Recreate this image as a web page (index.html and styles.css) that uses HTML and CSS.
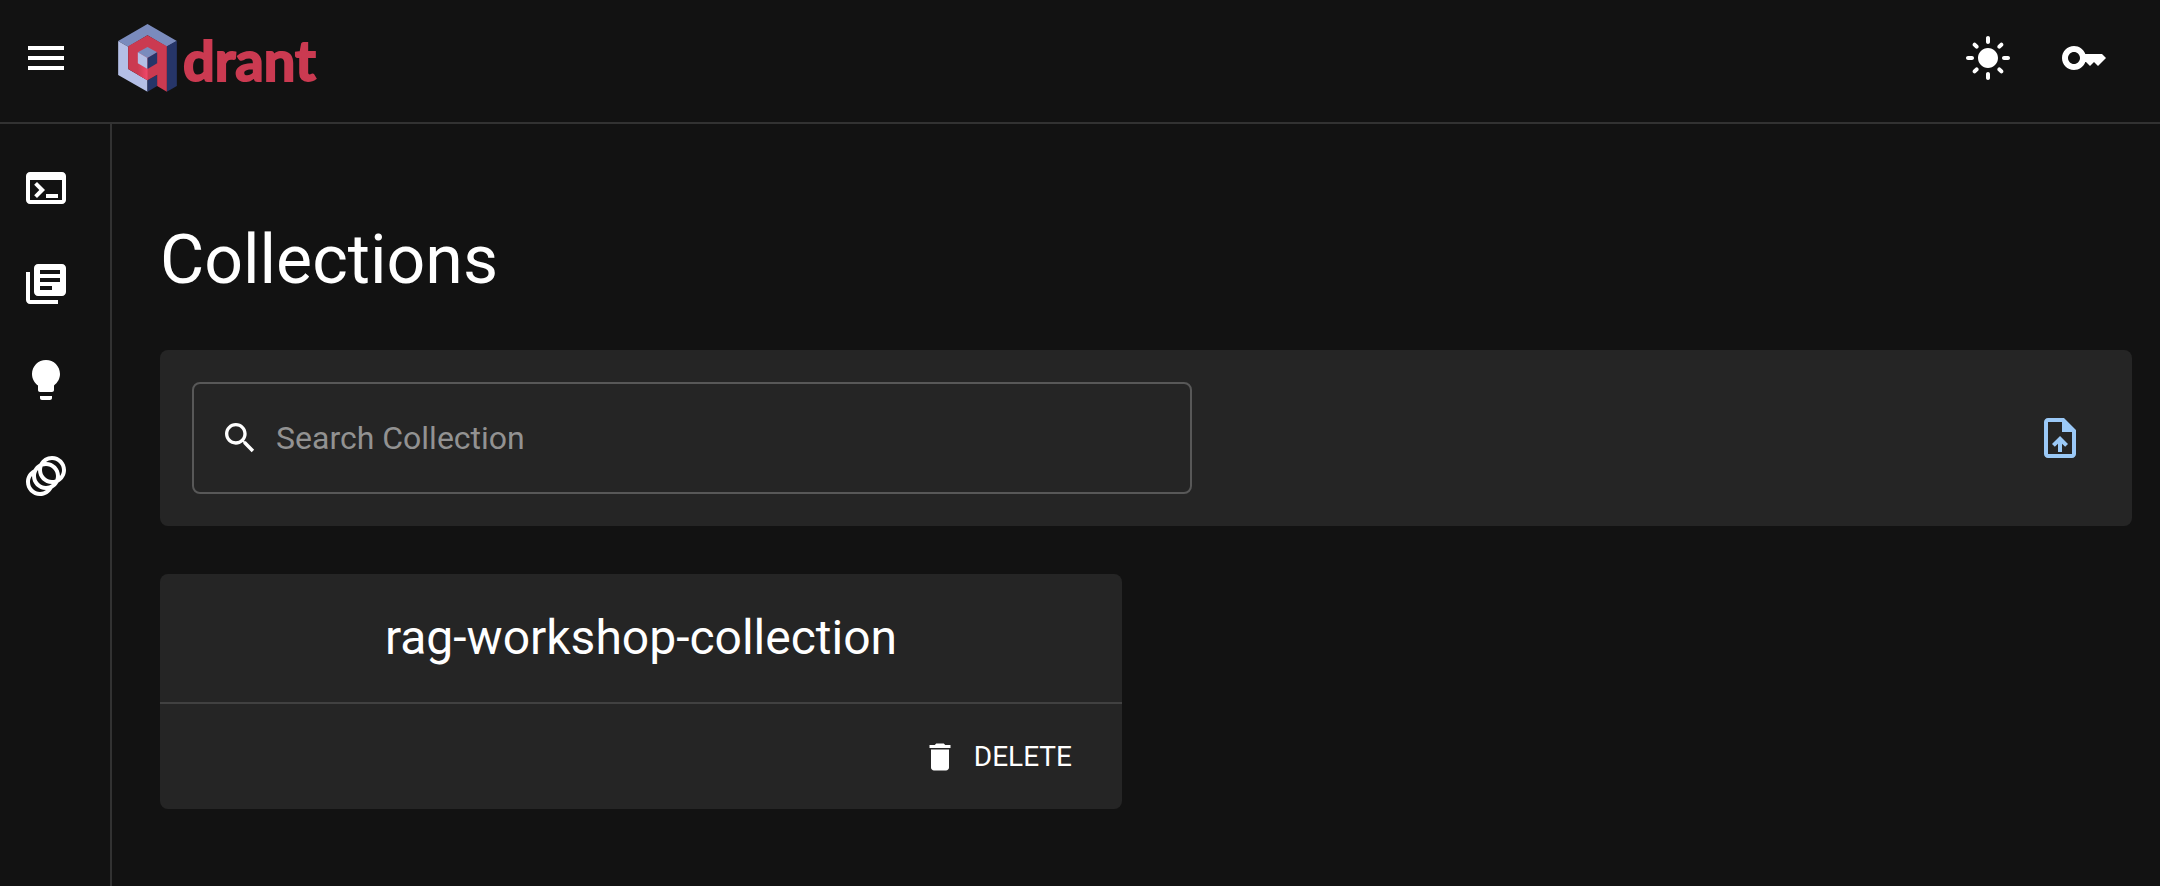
FILE: index.html
```html
<!DOCTYPE html>
<html lang="en">
<head>
  <meta charset="utf-8">
  <meta name="viewport" content="width=device-width, initial-scale=1">
  <title>Collections</title>
  <link rel="stylesheet" href="styles.css">
</head>
<body>
  <div class="app">
    <header class="topbar">
      <button class="icon-button" type="button" aria-label="Toggle menu">
        <svg class="icon" viewBox="0 0 24 24" aria-hidden="true"><path d="M3 18h18v-2H3v2zm0-5h18v-2H3v2zm0-7v2h18V6H3z"/></svg>
      </button>
      <a class="brand" href="#">
        <svg class="brand-mark" viewBox="0 0 176 204" aria-hidden="true">
          <defs>
            <linearGradient id="glow" x1="0" x2="1" y1="0" y2="0">
              <stop offset="0" stop-color="#cb3a51"/>
              <stop offset="1" stop-color="#f0486a"/>
            </linearGradient>
          </defs>
          <path fill="#7a8bbd" d="M88 0l88 51-30 17-58-34-58 34L0 51z"/>
          <path fill="#b4bfe6" d="M0 51l30 17v67l58 34v34L0 153z"/>
          <path fill="#263568" d="M146 67l30-17v136l-30 17z"/>
          <path fill="#263568" d="M88 169l29-17v34l-29 17z"/>
          <path fill="#cb3a51" d="M88 34l58 33v136l-29-17v-34l-29 17-58-34V67z"/>
          <path fill="url(#glow)" d="M59 118l29 17v34l-29-17z"/>
          <path fill="#7a8bbd" d="M88 69l29 16-29 17-29-17z"/>
          <path fill="#b4bfe6" d="M59 85l29 17v33l-29-17z"/>
          <path fill="#263568" d="M88 102l29-17v33l-29 17z"/>
        </svg>
        <span class="brand-name">drant</span>
      </a>
      <div class="topbar-actions">
        <button class="icon-button" type="button" aria-label="Switch theme">
          <svg class="icon" viewBox="0 0 24 24" aria-hidden="true"><path d="M12 7c-2.76 0-5 2.24-5 5s2.24 5 5 5 5-2.24 5-5-2.24-5-5-5zM2 13h2c.55 0 1-.45 1-1s-.45-1-1-1H2c-.55 0-1 .45-1 1s.45 1 1 1zm18 0h2c.55 0 1-.45 1-1s-.45-1-1-1h-2c-.55 0-1 .45-1 1s.45 1 1 1zM11 2v2c0 .55.45 1 1 1s1-.45 1-1V2c0-.55-.45-1-1-1s-1 .45-1 1zm0 18v2c0 .55.45 1 1 1s1-.45 1-1v-2c0-.55-.45-1-1-1s-1 .45-1 1zM5.99 4.58c-.39-.39-1.03-.39-1.41 0-.39.39-.39 1.03 0 1.41l1.06 1.06c.39.39 1.03.39 1.41 0s.39-1.03 0-1.41L5.99 4.58zm12.37 12.37c-.39-.39-1.03-.39-1.41 0-.39.39-.39 1.03 0 1.41l1.06 1.06c.39.39 1.03.39 1.41 0 .39-.39.39-1.03 0-1.41l-1.06-1.06zm1.06-10.96c.39-.39.39-1.03 0-1.41-.39-.39-1.03-.39-1.41 0l-1.06 1.06c-.39.39-.39 1.03 0 1.41s1.03.39 1.41 0l1.06-1.06zM7.05 18.36c.39-.39.39-1.03 0-1.41-.39-.39-1.03-.39-1.41 0l-1.06 1.06c-.39.39-.39 1.03 0 1.41s1.03.39 1.41 0l1.06-1.06z"/></svg>
        </button>
        <button class="icon-button" type="button" aria-label="API key">
          <svg class="icon" viewBox="0 0 24 24" aria-hidden="true"><path d="M21 10h-8.35C11.83 7.67 9.61 6 7 6c-3.31 0-6 2.69-6 6s2.69 6 6 6c2.61 0 4.83-1.67 5.65-4H13l2 2 2-2 2 2 4-4.04L21 10zM7 15c-1.65 0-3-1.35-3-3s1.35-3 3-3 3 1.35 3 3-1.35 3-3 3z"/></svg>
        </button>
      </div>
    </header>

    <div class="body">
      <nav class="sidebar" aria-label="Main">
        <a class="nav-link" href="#console" aria-label="Console">
          <svg class="icon" viewBox="0 0 24 24" aria-hidden="true"><path d="M20 4H4c-1.11 0-2 .9-2 2v12c0 1.1.89 2 2 2h16c1.1 0 2-.9 2-2V6c0-1.1-.89-2-2-2zm0 14H4V8h16v10zm-2-1h-6v-2h6v2zM7.5 17l-1.41-1.41L8.67 13l-2.59-2.59L7.5 9l4 4-4 4z"/></svg>
        </a>
        <a class="nav-link" href="#collections" aria-label="Collections">
          <svg class="icon" viewBox="0 0 24 24" aria-hidden="true"><path d="M4 6H2v14c0 1.1.9 2 2 2h14v-2H4V6zm16-4H8c-1.1 0-2 .9-2 2v12c0 1.1.9 2 2 2h12c1.1 0 2-.9 2-2V4c0-1.1-.9-2-2-2zm-1 9H9V9h10v2zm-4 4H9v-2h6v2zm4-8H9V5h10v2z"/></svg>
        </a>
        <a class="nav-link" href="#tutorial" aria-label="Tutorial">
          <svg class="icon" viewBox="0 0 24 24" aria-hidden="true"><path d="M9 21c0 .5.4 1 1 1h4c.6 0 1-.5 1-1v-1H9v1zm3-19C8.1 2 5 5.1 5 9c0 2.4 1.2 4.5 3 5.7V17c0 .5.4 1 1 1h6c.6 0 1-.5 1-1v-2.3c1.8-1.3 3-3.4 3-5.7 0-3.9-3.1-7-7-7z"/></svg>
        </a>
        <a class="nav-link" href="#datasets" aria-label="Datasets">
          <svg class="icon" viewBox="0 0 24 24" aria-hidden="true"><path d="M15 2c-2.71 0-5.05 1.54-6.22 3.78-1.28.67-2.34 1.72-3 3C3.54 9.95 2 12.29 2 15c0 3.87 3.13 7 7 7 2.71 0 5.05-1.54 6.22-3.78 1.28-.67 2.34-1.72 3-3C20.46 14.05 22 11.71 22 9c0-3.87-3.13-7-7-7zM9 20c-2.76 0-5-2.24-5-5 0-1.12.37-2.16 1-3 0 3.87 3.13 7 7 7-.84.63-1.88 1-3 1zm3-3c-2.76 0-5-2.24-5-5 0-1.12.37-2.16 1-3 0 3.86 3.13 6.99 7 7-.84.63-1.88 1-3 1zm4.7-3.3c-.53.19-1.1.3-1.7.3-2.76 0-5-2.24-5-5 0-.6.11-1.17.3-1.7.53-.19 1.1-.3 1.7-.3 2.76 0 5 2.24 5 5 0 .6-.11 1.17-.3 1.7zM19 12c0-3.86-3.13-6.99-7-7 .84-.63 1.87-1 3-1 2.76 0 5 2.24 5 5 0 1.12-.37 2.16-1 3z"/></svg>
        </a>
      </nav>

      <main class="content">
        <h1 class="page-title">Collections</h1>

        <section class="panel toolbar">
          <label class="search">
            <svg class="icon icon-search" viewBox="0 0 24 24" aria-hidden="true"><path d="M15.5 14h-.79l-.28-.27C15.41 12.59 16 11.11 16 9.5 16 5.91 13.09 3 9.5 3S3 5.91 3 9.5 5.91 16 9.5 16c1.61 0 3.09-.59 4.23-1.57l.27.28v.79l5 4.99L20.49 19l-4.99-5zm-6 0C7.01 14 5 11.99 5 9.5S7.01 5 9.5 5 14 7.01 14 9.5 11.99 14 9.5 14z"/></svg>
            <input class="search-input" type="text" placeholder="Search Collection" aria-label="Search Collection">
          </label>
          <button class="icon-button upload" type="button" aria-label="Upload snapshot">
            <svg class="icon" viewBox="0 0 24 24" aria-hidden="true"><path d="M14 2H6c-1.1 0-1.99.9-1.99 2L4 20c0 1.1.89 2 1.99 2H18c1.1 0 2-.9 2-2V8l-6-6zm4 18H6V4h7v5h5v11zM8 15.01l1.41 1.41L11 14.84V19h2v-4.16l1.59 1.59L16 15.01 12.01 11 8 15.01z"/></svg>
          </button>
        </section>

        <div class="collection-grid">
          <article class="panel">
            <h2 class="collection-head"><a class="collection-name" href="#rag-workshop-collection">rag-workshop-collection</a></h2>
            <div class="collection-actions">
              <button class="text-button" type="button">
                <svg class="icon icon-small" viewBox="0 0 24 24" aria-hidden="true"><path d="M6 19c0 1.1.9 2 2 2h8c1.1 0 2-.9 2-2V7H6v12zM19 4h-3.5l-1-1h-5l-1 1H5v2h14V4z"/></svg>
                DELETE
              </button>
            </div>
          </article>
        </div>
      </main>
    </div>
  </div>
</body>
</html>
```

FILE: styles.css
```css
*,
*::before,
*::after {
  box-sizing: border-box;
}

body {
  margin: 0;
  background: #121212;
  color: #fff;
  font-family: Roboto, "Liberation Sans", sans-serif;
  font-size: 32px;
}

a {
  color: inherit;
  text-decoration: none;
}

button {
  border: 0;
  padding: 0;
  background: none;
  color: inherit;
  font: inherit;
  cursor: pointer;
}

.app {
  display: flex;
  flex-direction: column;
  min-height: 100vh;
}

/* Icons */

.icon {
  display: block;
  flex: none;
  width: 48px;
  height: 48px;
  fill: currentColor;
}

.icon-search {
  width: 40px;
  height: 40px;
}

.icon-small {
  width: 36px;
  height: 36px;
}

/* Top bar */

.topbar {
  display: flex;
  align-items: center;
  gap: 48px;
  padding: 24px 52px 30px 22px;
  border-bottom: 2px solid #323232;
}

.brand {
  display: flex;
  align-items: center;
  gap: 6px;
}

.brand-mark {
  display: block;
  width: 59px;
  height: 68px;
}

.brand-name {
  padding-top: 4px;
  color: #cb3a51;
  font-family: Lato, sans-serif;
  font-size: 56px;
  font-weight: 700;
  line-height: 64px;
  -webkit-text-stroke: 2px #cb3a51;
}

.topbar-actions {
  display: flex;
  gap: 48px;
  margin-left: auto;
}

/* Layout */

.body {
  display: flex;
  flex: 1;
}

.sidebar {
  flex: none;
  padding-top: 16px;
  border-right: 2px solid #323232;
}

.nav-link {
  display: block;
  padding: 24px 40px 24px 22px;
}

.content {
  flex: 1;
  min-width: 0;
  padding: 94px 28px 48px 48px;
}

.page-title {
  margin: 0 0 48px;
  font-size: 68px;
  font-weight: 400;
  line-height: 84px;
}

.panel {
  border-radius: 8px;
  background: #252525;
}

/* Search toolbar */

.toolbar {
  display: flex;
  align-items: center;
  justify-content: space-between;
  gap: 32px;
  padding: 32px 48px 32px 32px;
}

.search {
  display: flex;
  flex: 1;
  align-items: center;
  gap: 16px;
  max-width: 1000px;
  padding: 32px 26px;
  border: 2px solid #585858;
  border-radius: 8px;
}

.search-input {
  flex: 1;
  min-width: 0;
  height: 44px;
  padding: 0;
  border: 0;
  outline: 0;
  background: none;
  color: inherit;
  font: inherit;
}

.search-input::placeholder {
  color: #929292;
  opacity: 1;
}

.upload {
  color: #9bc9f7;
}

/* Collections */

.collection-grid {
  display: grid;
  grid-template-columns: repeat(2, 1fr);
  gap: 48px;
  margin-top: 48px;
}

.collection-head {
  margin: 0;
  padding: 32px;
  border-bottom: 2px solid #414141;
  font-size: 48px;
  font-weight: 400;
  line-height: 64px;
  text-align: center;
}

.collection-actions {
  display: flex;
  justify-content: flex-end;
  padding: 16px;
}

.text-button {
  display: flex;
  align-items: center;
  gap: 16px;
  padding: 12px 34px;
  font-size: 28px;
  line-height: 49px;
}
```
